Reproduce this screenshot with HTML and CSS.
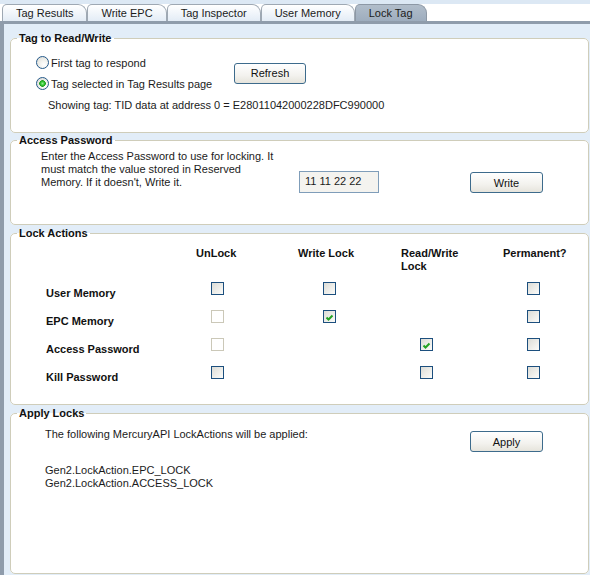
FILE: index.html
```html
<!DOCTYPE html>
<html>
<head>
<meta charset="utf-8">
<link rel="stylesheet" href="styles.css">
</head>
<body>
<div class="tabs">
  <div class="tab">Tag Results</div>
  <div class="tab">Write EPC</div>
  <div class="tab">Tag Inspector</div>
  <div class="tab">User Memory</div>
  <div class="tab active">Lock Tag</div>
</div>
<div class="panel">
  <fieldset class="group g1">
    <legend>Tag to Read/Write</legend>
    <div class="g1-body">
      <div class="pick-row">
        <div class="radios">
          <div class="radio-row"><span class="radio"></span>First tag to respond</div>
          <div class="radio-row"><span class="radio on"></span>Tag selected in Tag Results page</div>
        </div>
        <span class="btn btn-refresh">Refresh</span>
      </div>
      <div class="showing">Showing tag: TID data at address 0 = E28011042000228DFC990000</div>
    </div>
  </fieldset>

  <fieldset class="group g2">
    <legend>Access Password</legend>
    <div class="g2-body">
      <div class="note">Enter the Access Password to use for locking. It must match the value stored in Reserved Memory. If it doesn't, Write it.</div>
      <div class="pw-input">11 11 22 22</div>
      <span class="btn btn-write">Write</span>
    </div>
  </fieldset>

  <fieldset class="group g3">
    <legend>Lock Actions</legend>
    <div class="g3-body">
      <div class="hd"></div>
      <div class="hd">UnLock</div>
      <div class="hd">Write Lock</div>
      <div class="hd">Read/Write<br>Lock</div>
      <div class="hd">Permanent?</div>

      <div class="rl">User Memory</div>
      <div class="cell c1"><span class="cb"></span></div>
      <div class="cell c2"><span class="cb"></span></div>
      <div class="cell c3"></div>
      <div class="cell c4"><span class="cb"></span></div>

      <div class="rl">EPC Memory</div>
      <div class="cell c1"><span class="cb dis"></span></div>
      <div class="cell c2"><span class="cb"><svg viewBox="0 0 11 11" width="11" height="11"><path d="M2.5 5.5 L4.5 7.5 L8.5 3.5" fill="none" stroke="#22a322" stroke-width="2"/></svg></span></div>
      <div class="cell c3"></div>
      <div class="cell c4"><span class="cb"></span></div>

      <div class="rl">Access Password</div>
      <div class="cell c1"><span class="cb dis"></span></div>
      <div class="cell c2"></div>
      <div class="cell c3"><span class="cb"><svg viewBox="0 0 11 11" width="11" height="11"><path d="M2.5 5.5 L4.5 7.5 L8.5 3.5" fill="none" stroke="#22a322" stroke-width="2"/></svg></span></div>
      <div class="cell c4"><span class="cb"></span></div>

      <div class="rl">Kill Password</div>
      <div class="cell c1"><span class="cb"></span></div>
      <div class="cell c2"></div>
      <div class="cell c3"><span class="cb"></span></div>
      <div class="cell c4"><span class="cb"></span></div>
    </div>
  </fieldset>

  <fieldset class="group g4">
    <legend>Apply Locks</legend>
    <div class="g4-body">
      <div class="apply-row">
        <div class="apply-text">The following MercuryAPI LockActions will be applied:</div>
        <span class="btn btn-apply">Apply</span>
      </div>
      <div class="codes">Gen2.LockAction.EPC_LOCK<br>Gen2.LockAction.ACCESS_LOCK</div>
    </div>
  </fieldset>
</div>
</body>
</html>
```

FILE: styles.css
```css
* { box-sizing: border-box; }
html, body { margin: 0; padding: 0; }
body {
  width: 590px;
  height: 575px;
  overflow: hidden;
  font-family: "Liberation Sans", Arial, sans-serif;
  font-size: 11px;
  color: #1b1b1b;
  background: #fff;
}

.tabs {
  display: flex;
  height: 21px;
  padding: 4px 0 0 2px;
  background: linear-gradient(#dce8f4 0, #dce8f4 4px, #ffffff 4px);
}
.tab {
  height: 17px;
  padding: 0 13px;
  line-height: 16px;
  border: 1px solid #9ea8b3;
  border-bottom: none;
  border-radius: 5px 9px 0 0;
  background: linear-gradient(#ffffff, #e3ecf6);
  color: #1b1b1b;
  white-space: nowrap;
}
.tab.active {
  background: linear-gradient(#b1bdca, #9eadbe);
  border-color: #8d98a5;
}

.panel {
  height: 554px;
  border-top: 3px solid #8f9cab;
  border-left: 4px solid #8f9cab;
  background: #e2edf8;
  padding: 8px 1px 0 6px;
}

.group {
  margin: 0;
  padding: 0;
  border: 1px solid #cfcdba;
  border-radius: 5px;
  background: #fff;
  min-width: 0;
}
.group legend {
  margin-left: 6px;
  padding: 0 2px;
  font-weight: bold;
  font-size: 11px;
  line-height: 13px;
  color: #111;
}
.g2 { margin-top: 1px; }
.g3 { margin-top: 2px; }
.g4 { margin-top: 2px; }

/* group 1 */
.g1-body {
  height: 87px;
  padding: 7px 0 0 25px;
}
.pick-row {
  display: flex;
  align-items: center;
}
.radios { width: 198px; }
.radio-row {
  height: 21px;
  display: flex;
  align-items: center;
  gap: 2px;
  white-space: nowrap;
}
.radio {
  width: 13px;
  height: 13px;
  border-radius: 50%;
  border: 1px solid #24598a;
  background: radial-gradient(circle at 65% 70%, #ffffff 0, #f2f2ee 40%, #d8d8d2 100%);
}
.radio.on {
  background:
    radial-gradient(circle at 50% 50%, #8ef08e 0, #2fbf2f 2px, #1e9f1e 3px, rgba(0,0,0,0) 3.6px),
    radial-gradient(circle at 65% 70%, #ffffff 0, #f2f2ee 40%, #d8d8d2 100%);
}
.showing {
  margin-top: 5px;
  padding-left: 12px;
  line-height: 13px;
}

.btn {
  display: inline-flex;
  align-items: center;
  justify-content: center;
  height: 21px;
  border: 1px solid #3d6b8c;
  border-radius: 3px;
  background: linear-gradient(#ffffff, #f3f2ee 60%, #e6e4dc);
  color: #111;
  font-size: 11px;
}
.btn-refresh { width: 72px; }
.btn-write, .btn-apply { width: 73px; }

/* group 2 */
.g2-body {
  height: 77px;
  padding: 3px 0 0 30px;
  display: flex;
  align-items: flex-start;
}
.note {
  width: 238px;
  line-height: 13px;
}
.pw-input {
  margin: 21px 0 0 20px;
  width: 80px;
  height: 22px;
  border: 1px solid #7f9db9;
  background: #f4f3ef;
  padding: 3px 0 0 5px;
  line-height: 13px;
}
.btn-write { margin: 22px 0 0 91px; }

/* group 3 */
.g3-body {
  height: 164px;
  padding: 7px 0 0 35px;
  display: grid;
  grid-template-columns: 150px 102px 103px 102px 80px;
  grid-template-rows: 32px repeat(4, 28px);
}
.hd {
  font-weight: bold;
  line-height: 13px;
  color: #111;
}
.rl {
  font-weight: bold;
  line-height: 28px;
  color: #111;
}
.cell { padding-top: 3px; }
.c1 { padding-left: 15px; }
.c2 { padding-left: 25px; }
.c3 { padding-left: 19px; }
.c4 { padding-left: 24px; }
.cb {
  display: block;
  width: 13px;
  height: 13px;
  border: 1px solid #1c4f7e;
  background: linear-gradient(135deg, #dcdcd6 0, #ececE8 50%, #fbfbf9 100%);
}
.cb svg { display: block; margin-top: 1px; }
.cb.dis {
  border-color: #cbc8b8;
  background: #fff;
}

/* group 4 */
.g4-body {
  height: 153px;
  padding: 8px 0 0 34px;
}
.apply-row {
  display: flex;
  align-items: flex-start;
}
.apply-text {
  width: 425px;
  line-height: 13px;
}
.btn-apply { margin-top: 3px; }
.codes {
  margin-top: 12px;
  line-height: 13px;
}
```
